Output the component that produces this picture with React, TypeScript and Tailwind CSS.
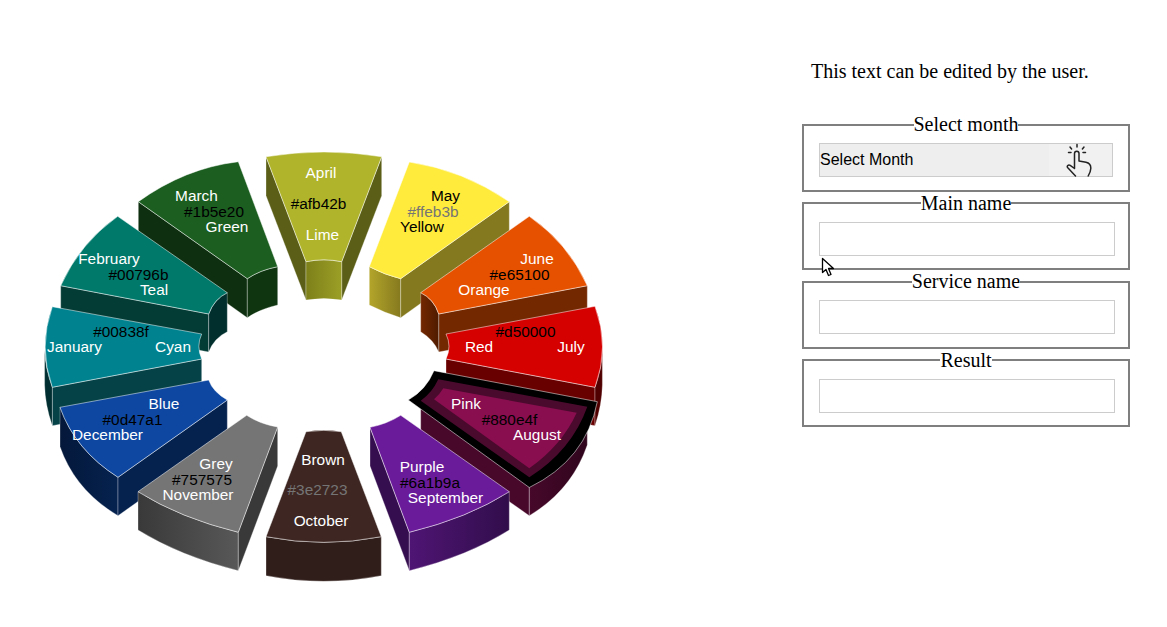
type Label = { text: string; x: number; y: number; className: string };

type Slice = {
  name: string;
  top: string;
  topClass: string;
  sides: { d: string; className: string }[];
  labels: Label[];
};

const white = "fill-white";
const black = "fill-black";
const grey = "fill-[#757575]";

// back to front, so nearer slices cover the sides of farther ones
const slices: Slice[] = [
  {
    name: "april",
    top: "M266,156.7 Q324,147.3 381.7,156.7 L341.7,261.7 Q324,258 306,261.7 Z",
    topClass: "fill-[#afb42b]",
    sides: [
      { d: "M266,156.7 L306,261.7 V300 L266,195.7 Z", className: "fill-[#5a5e16]" },
      { d: "M381.7,156.7 L341.7,261.7 V300 L381.7,195.7 Z", className: "fill-[#5a5e16]" },
      { d: "M306,261.7 Q324,258 341.7,261.7 V300 Q324,297 306,300 Z", className: "fill-[url(#aprilInner)]" },
    ],
    labels: [
      { text: "April", x: 321, y: 178, className: white },
      { text: "#afb42b", x: 318.5, y: 209, className: black },
      { text: "Lime", x: 322.5, y: 240, className: white },
    ],
  },
  {
    name: "march",
    top: "M138.3,201.7 Q185,168 238.3,161.7 L277.7,266.7 Q260,270 247.3,278.7 Z",
    topClass: "fill-[#1b5e20]",
    sides: [
      { d: "M138.3,201.7 L247.3,278.7 V317.7 L138.3,240 Z", className: "fill-[#0e2f10]" },
      { d: "M247.3,278.7 Q260,270 277.7,266.7 V305 Q260,309 247.3,317.7 Z", className: "fill-[#0e3510]" },
    ],
    labels: [
      { text: "March", x: 196.5, y: 201, className: white },
      { text: "#1b5e20", x: 214, y: 217, className: black },
      { text: "Green", x: 227, y: 232, className: white },
    ],
  },
  {
    name: "may",
    top: "M369.3,266.7 L409.3,162 Q463,170 509.3,201.7 L400.7,278.7 Q385,275 369.3,266.7 Z",
    topClass: "fill-[#ffeb3b]",
    sides: [
      { d: "M369.3,266.7 Q385,275 400.7,278.7 V317.7 Q385,313 369.3,305 Z", className: "fill-[url(#mayInner)]" },
      { d: "M400.7,278.7 L509.3,201.7 V240 L400.7,317.7 Z", className: "fill-[#85791f]" },
    ],
    labels: [
      { text: "May", x: 445.5, y: 201, className: black },
      { text: "#ffeb3b", x: 433, y: 217, className: grey },
      { text: "Yellow", x: 422, y: 232, className: black },
    ],
  },
  {
    name: "february",
    top: "M60.7,285.7 Q80,243 117.7,216.3 L227.3,292.7 Q214,299 208.7,314 Z",
    topClass: "fill-[#00796b]",
    sides: [
      { d: "M60.7,285.7 L208.7,314 V352 L60.7,324 Z", className: "fill-[#033b35]" },
      { d: "M208.7,314 Q214,299 227.3,292.7 V331.7 Q214,338 208.7,352 Z", className: "fill-[#012f2e]" },
    ],
    labels: [
      { text: "February", x: 109, y: 264, className: white },
      { text: "#00796b", x: 138.5, y: 280, className: black },
      { text: "Teal", x: 154, y: 295, className: white },
    ],
  },
  {
    name: "june",
    top: "M420.7,292.7 L529.3,216.3 Q568,243 587.3,285.7 L438.7,314 Q434,299 420.7,292.7 Z",
    topClass: "fill-[#e65100]",
    sides: [
      { d: "M438.7,314 L587.3,285.7 V324 L438.7,352 Z", className: "fill-[#732800]" },
      { d: "M420.7,292.7 Q434,299 438.7,314 V352 Q434,340 420.7,331.7 Z", className: "fill-[url(#juneInner)]" },
    ],
    labels: [
      { text: "June", x: 537, y: 264, className: white },
      { text: "#e65100", x: 519.5, y: 280, className: black },
      { text: "Orange", x: 484, y: 295, className: white },
    ],
  },
  {
    name: "january",
    top: "M52.3,306.7 L201.7,334 Q196,346 201.7,359 L52.3,387.3 Q38,347 52.3,306.7 Z",
    topClass: "fill-[#00838f]",
    sides: [
      { d: "M52.3,387.3 L201.7,359 V398 L52.3,425.7 Z", className: "fill-[#044247]" },
      { d: "M44.6,350 Q45.5,370 52.3,387.3 V425.7 Q45,405 44.6,385 Z", className: "fill-[#012e31]" },
    ],
    labels: [
      { text: "#00838f", x: 121, y: 337, className: black },
      { text: "January", x: 74.5, y: 352, className: white },
      { text: "Cyan", x: 173, y: 352, className: white },
    ],
  },
  {
    name: "july",
    top: "M446,334 L595,306.3 Q610,347 595,387.3 L446,359 Q452,346 446,334 Z",
    topClass: "fill-[#d50000]",
    sides: [
      { d: "M446,359 L595,387.3 V425.7 L446,398 Z", className: "fill-[#690000]" },
      { d: "M602.4,350 Q601.5,370 595,387.3 V425.7 Q602,405 602.4,385 Z", className: "fill-[#500000]" },
    ],
    labels: [
      { text: "#d50000", x: 525.5, y: 337, className: black },
      { text: "Red", x: 479, y: 352, className: white },
      { text: "July", x: 571, y: 352, className: white },
    ],
  },
  {
    name: "december",
    top: "M60,407.3 L208.7,380 Q213,392 227.3,400 L118,477.3 Q75,450 60,407.3 Z",
    topClass: "fill-[#0d47a1]",
    sides: [
      { d: "M60,407.3 Q75,450 118,477.3 V515.7 Q75,490 60,446.7 Z", className: "fill-[url(#decemberOuter)]" },
      { d: "M118,477.3 L227.3,400 V438.3 L118,515.7 Z", className: "fill-[#05224f]" },
    ],
    labels: [
      { text: "Blue", x: 164, y: 409, className: white },
      { text: "#0d47a1", x: 132.5, y: 425, className: black },
      { text: "December", x: 107.5, y: 440, className: white },
    ],
  },
  {
    name: "august",
    top: "M434,370.7 Q426,390 408.3,400 L529.3,487.5 Q586,460 597.3,401.7 Z",
    topClass: "fill-black",
    sides: [
      { d: "M420.7,400.7 L529.3,477.3 V515.7 L420.7,439 Z", className: "fill-[#47082a]" },
      { d: "M529.3,477.3 Q572,450 587.3,406.7 V445 Q572,490 529.3,515.7 Z", className: "fill-[url(#augustOuter)]" },
    ],
    labels: [],
  },
  {
    name: "november",
    top: "M246.7,415.3 Q260,424 277.7,427 L238.3,532.3 Q180,518 138,491.7 Z",
    topClass: "fill-[#757575]",
    sides: [
      { d: "M138,491.7 Q180,518 238.3,532.3 V570.7 Q180,556 138,530 Z", className: "fill-[url(#novemberOuter)]" },
      { d: "M238.3,532.3 L277.7,427 V466 L238.3,570.7 Z", className: "fill-[#393939]" },
    ],
    labels: [
      { text: "Grey", x: 216, y: 469, className: white },
      { text: "#757575", x: 202, y: 485, className: black },
      { text: "November", x: 198, y: 500, className: white },
    ],
  },
  {
    name: "september",
    top: "M400.7,415.3 Q387,424 370,427.3 L409.3,532.3 Q468,518 509.3,491.7 Z",
    topClass: "fill-[#6a1b9a]",
    sides: [
      { d: "M370,427.3 L409.3,532.3 V570.7 L370,466 Z", className: "fill-[#350e4f]" },
      { d: "M409.3,532.3 Q468,518 509.3,491.7 V530 Q468,556 409.3,570.7 Z", className: "fill-[url(#septemberOuter)]" },
    ],
    labels: [
      { text: "Purple", x: 422, y: 472, className: white },
      { text: "#6a1b9a", x: 430, y: 488, className: black },
      { text: "September", x: 445.5, y: 503, className: white },
    ],
  },
  {
    name: "october",
    top: "M306,431.7 Q324,429 341.3,431.7 L381.3,536.7 Q324,548 266,536.7 Z",
    topClass: "fill-[#3e2723]",
    sides: [
      { d: "M266,536.7 Q324,548 381.3,536.7 V575.7 Q324,587 266,575.7 Z", className: "fill-[#301e1a]" },
    ],
    labels: [
      { text: "Brown", x: 323, y: 465, className: white },
      { text: "#3e2723", x: 317.5, y: 495, className: grey },
      { text: "October", x: 321, y: 526, className: white },
    ],
  },
];

const Gradient = ({ id, from, to }: { id: string; from: string; to: string }) => (
  <linearGradient id={id}>
    <stop offset="0" stopColor={from} />
    <stop offset="1" stopColor={to} />
  </linearGradient>
);

const Wheel = () => (
  <svg width="802" height="627" viewBox="0 0 802 627" className="shrink-0 font-['Liberation_Sans',sans-serif] text-[15.4px]">
    <defs>
      <Gradient id="aprilInner" from="#7d8019" to="#9c9f26" />
      <Gradient id="mayInner" from="#b3a52a" to="#85791f" />
      <Gradient id="juneInner" from="#732800" to="#4f1b00" />
      <Gradient id="decemberOuter" from="#04183a" to="#05224f" />
      <Gradient id="augustOuter" from="#47082a" to="#2f051c" />
      <Gradient id="novemberOuter" from="#393939" to="#585858" />
      <Gradient id="septemberOuter" from="#4f1574" to="#310d4b" />
    </defs>
    {slices.map((slice) => (
      <g key={slice.name}>
        {slice.sides.map((side) => (
          <path key={side.d} d={side.d} className={`${side.className} stroke-white/30 stroke-1`} />
        ))}
        <path d={slice.top} className={`${slice.topClass} stroke-white/50 stroke-1`} />
        {slice.name === "august" && (
          <>
            <path d="M438.3,379.3 Q432,393 420.7,400.7 L529.3,477.3 Q572,450 587.3,406.7 Z" className="fill-[#4a0a2e]" />
            <path d="M443.3,388.3 Q440,394 434,399.3 L529.3,468.3 Q562,445 576.7,412.7 Z" className="fill-[#880e4f]" />
          </>
        )}
      </g>
    ))}
    {/* august sits under september, its labels do not */}
    <text x="466" y="409" textAnchor="middle" className="fill-white">Pink</text>
    <text x="509.5" y="425" textAnchor="middle" className="fill-black">#880e4f</text>
    <text x="537" y="440" textAnchor="middle" className="fill-white">August</text>
    {slices.flatMap((slice) =>
      slice.labels.map((label) => (
        <text key={label.text} x={label.x} y={label.y} textAnchor="middle" className={label.className}>
          {label.text}
        </text>
      )),
    )}
  </svg>
);

const HandIcon = () => (
  <svg width="28" height="34" viewBox="0 0 28 34" fill="none" stroke="#222" strokeWidth="1.5" strokeLinecap="round" strokeLinejoin="round">
    <path d="M11 1.5V4M4 4l1.6 2M18 4l-1.6 2M2.5 9.5H5M17 9.5h2.5" />
    <path d="M9.5 33 1.8 24.8c-1.4-1.6.6-3.6 2.4-2.4L8.5 25.5V10.5c0-3 4.5-3 4.5 0V18l7 1.2c3.5.8 5 3 4.8 6.3-.1 2.6-1.3 5.2-2.6 7.5" />
  </svg>
);

const Field = ({ title, children }: { title: string; children: React.ReactNode }) => (
  <fieldset className="min-w-0 border-2 border-[#7f7f7f] px-[15px] pt-[7px] pb-[12.4px]">
    <legend className="mx-auto text-[20px] leading-[23px] text-black">{title}</legend>
    {children}
  </fieldset>
);

const TextBox = () => <input type="text" className="block h-[34px] w-[296px] border border-[#cccccc] bg-white" />;

export default function App() {
  return (
    <div className="flex h-[627px] w-[1167px] overflow-hidden bg-white font-['Liberation_Serif',serif]">
      <Wheel />
      <div className="relative w-[328px] shrink-0">
        <p className="mt-[60px] mb-[30.4px] pl-[9px] text-[20px] leading-[23px] text-black">This text can be edited by the user.</p>
        <Field title="Select month">
          <div className="flex h-[34px] w-[294px] items-center justify-between border border-[#cccccc] bg-[#eeeeee] text-[16px] text-black font-['Liberation_Sans',sans-serif]">
            <span>Select Month</span>
            <div className="flex h-full w-[63px] items-center justify-start bg-[#f1f1f1] pl-[17px]">
              <HandIcon />
            </div>
          </div>
        </Field>
        <Field title="Main name">
          <TextBox />
        </Field>
        <Field title="Service name">
          <TextBox />
        </Field>
        <Field title="Result">
          <TextBox />
        </Field>
        {/* mouse pointer caught in the screenshot */}
        <svg width="14" height="20" viewBox="0 0 14 20" className="absolute top-[257px] left-[19px]">
          <path d="M1.5 1.5V15.5L5 12.5 7.5 18.5 10 17.5 7.5 11.5H12.5Z" fill="white" stroke="black" strokeWidth="1.3" strokeLinejoin="round" />
        </svg>
      </div>
    </div>
  );
}
